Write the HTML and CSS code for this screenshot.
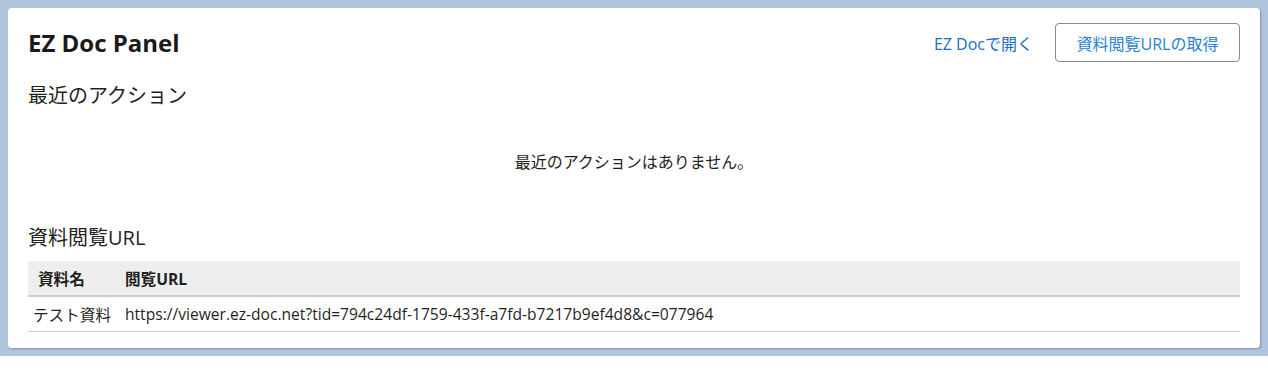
FILE: index.html
```html
<!DOCTYPE html>
<html lang="ja">
<head>
<meta charset="utf-8">
<title>EZ Doc Panel</title>
<link rel="stylesheet" href="styles.css">
</head>
<body>
<div class="page">
  <div class="card">
    <div class="header">
      <h1 class="title">EZ Doc Panel</h1>
      <div class="actions">
        <a class="link" href="#">EZ Docで開く</a>
        <button class="btn" type="button">資料閲覧URLの取得</button>
      </div>
    </div>
    <h2 class="section-title">最近のアクション</h2>
    <div class="empty">最近のアクションはありません。</div>
    <h2 class="section-title second">資料閲覧URL</h2>
    <table class="table">
      <thead>
        <tr><th class="c1">資料名</th><th class="c2">閲覧URL</th></tr>
      </thead>
      <tbody>
        <tr><td class="c1">テスト資料</td><td class="c2">https://viewer.ez-doc.net?tid=794c24df-1759-433f-a7fd-b7217b9ef4d8&amp;c=077964</td></tr>
      </tbody>
    </table>
  </div>
</div>
</body>
</html>
```

FILE: styles.css
```css
html, body {
  margin: 0;
  padding: 0;
  background: #ffffff;
}
body {
  font-family: "Open Sans", "Noto Sans CJK JP", sans-serif;
  color: #1f1f1f;
}
.page {
  background: #b0c4de;
  padding: 8px;
}
.card {
  background: #ffffff;
  border-radius: 4px;
  box-shadow: 1px 1px 2px rgba(0, 0, 0, 0.25);
  padding: 15px 20px 16px 20px;
}
.header {
  display: flex;
  justify-content: space-between;
  align-items: center;
  height: 39px;
}
.title {
  margin: 0;
  font-size: 24px;
  font-weight: 700;
  line-height: 32px;
  color: #1a1a1a;
}
.actions {
  display: flex;
  align-items: center;
  gap: 22px;
}
.link {
  color: #1b6cc6;
  text-decoration: none;
  font-size: 16px;
}
.btn {
  font-family: inherit;
  font-size: 16px;
  color: #2a7fd6;
  background: #ffffff;
  border: 1px solid #8a8a8a;
  border-radius: 4px;
  height: 39px;
  width: 185px;
  padding: 0;
  cursor: pointer;
}
.section-title {
  margin: 20px 0 0 0;
  font-size: 20px;
  font-weight: 400;
  line-height: 28px;
  color: #1f1f1f;
}
.section-title.second {
  margin-top: 10px;
}
.empty {
  text-align: center;
  font-size: 16px;
  line-height: 20px;
  padding: 42px 0;
}
.table {
  margin-top: 9px;
  width: 100%;
  border-collapse: collapse;
  font-size: 15.6px;
}
.table th {
  background: #eeeeee;
  font-weight: 700;
  text-align: left;
  height: 34px;
  padding: 0 5px;
  border-bottom: 2px solid #cccccc;
}
.table td {
  height: 34px;
  padding: 0 5px;
  border-bottom: 1px solid #cccccc;
}
.table .c1 {
  width: 82px;
}
.table th.c1 {
  padding-left: 10px;
  width: 77px;
}
```
